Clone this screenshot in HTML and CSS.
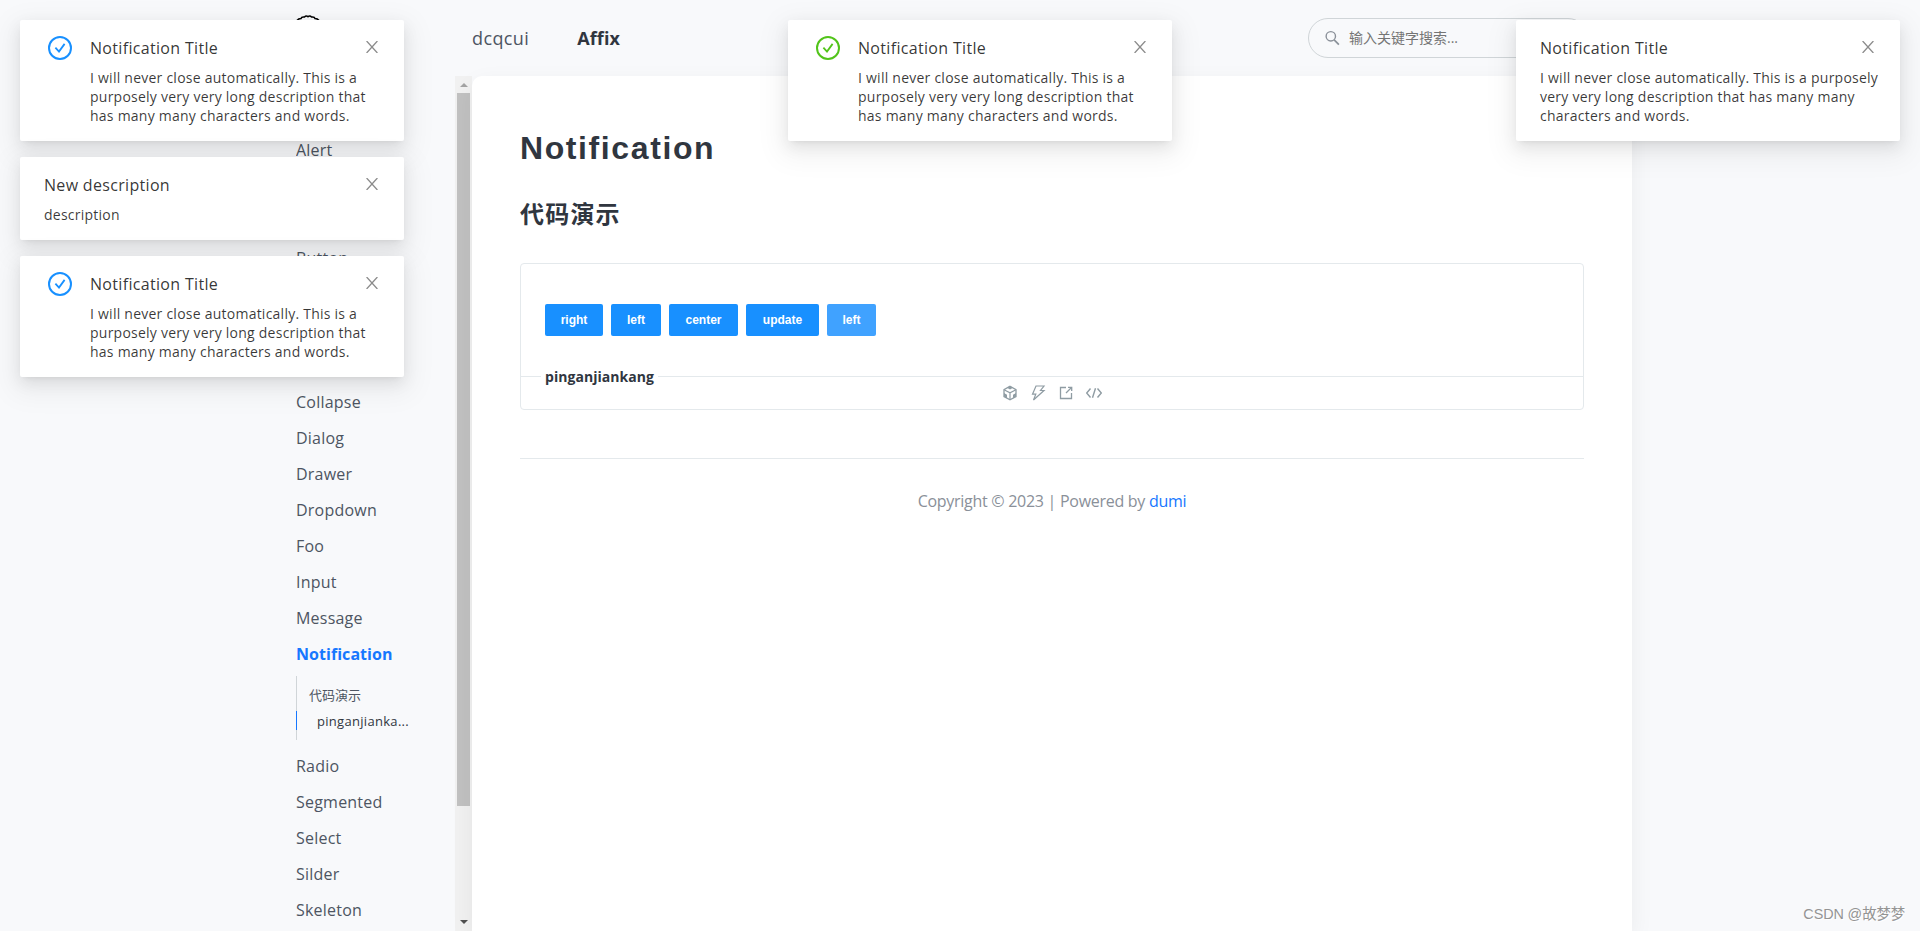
FILE: index.html
```html
<!DOCTYPE html>
<html lang="zh-CN">
<head>
<meta charset="utf-8">
<title>Notification</title>
<link rel="stylesheet" href="styles.css">
</head>
<body>
<svg class="defs" aria-hidden="true">
  <symbol id="check" viewBox="0 0 24 24"><circle cx="12" cy="12" r="11" fill="none" stroke="currentColor" stroke-width="2"/><path d="M7.4 11.600l3.600 3.900 5.600-7.600" fill="none" stroke="currentColor" stroke-width="1.800"/></symbol>
  <symbol id="close" viewBox="0 0 12 12"><path d="M.6 0L11.4 12M11.4 0L.6 12" fill="none" stroke="currentColor" stroke-width="1.3"/></symbol>
</svg>
<div class="page">
  <header class="header">
    <div class="brand">
      <svg class="logo" viewBox="0 0 32 32"><path d="M4 6.500q1.500-2 4-2q.5-2 3.500-1.500q1.500-1.800 3.500-.3q2-1.500 3.500.3q3-.5 3.500 1.500q2.500 0 4 2" fill="none" stroke="#000" stroke-width="1.500"/></svg>
    </div>
    <nav class="nav"><a class="nav-item">dcqcui</a><a class="nav-item nav-on">Affix</a></nav>
    <div class="search">
      <svg class="search-icon" viewBox="0 0 16 16"><circle cx="6.2" cy="6.2" r="5" fill="none" stroke="#8a9099" stroke-width="1.5"/><path d="M9.8 10l5 5" stroke="#8a9099" stroke-width="1.8"/></svg>
      <span>输入关键字搜索...</span>
    </div>
  </header>
  <div class="body">
    <aside class="sidebar">
      <ul class="menu">
        <li class="item alert">Alert</li>
        <li class="item button">Button</li>
        <li class="item">Collapse</li>
        <li class="item">Dialog</li>
        <li class="item">Drawer</li>
        <li class="item">Dropdown</li>
        <li class="item">Foo</li>
        <li class="item">Input</li>
        <li class="item">Message</li>
        <li class="item item-on">Notification</li>
        <li class="toc"><div class="toc-item">代码演示</div><div class="toc-item toc-on"><span>pinganjianka...</span></div></li>
        <li class="item">Radio</li>
        <li class="item">Segmented</li>
        <li class="item">Select</li>
        <li class="item">Silder</li>
        <li class="item">Skeleton</li>
      </ul>
      <div class="scrollbar"><i class="arrow up"></i><div class="thumb"></div><i class="arrow down"></i></div>
    </aside>
    <main class="content">
      <h1>Notification</h1>
      <h2>代码演示</h2>
      <section class="demo">
        <div class="buttons">
          <button class="btn w58">right</button><button class="btn w50">left</button><button class="btn w69">center</button><button class="btn w73">update</button><button class="btn w49 hover">left</button>
        </div>
        <div class="divider"><span class="demo-title">pinganjiankang</span></div>
        <div class="actions">
          <svg viewBox="0 0 16 16"><path d="M8 1.3l6 3.3v6.9l-6 3.3-6-3.3V4.600z" fill="none" stroke="currentColor" stroke-width="1.3"/><path d="M2 4.700l6 3.200 6-3.200M8 8v6.500" fill="none" stroke="currentColor" stroke-width="1.2"/><path d="M8 1l3 1.700-3 1.700-3-1.700zM2 8l3 1.700v3.500l-3-1.700zM14 8l-3 1.700v3.500l3-1.700z" fill="currentColor"/></svg>
          <svg viewBox="0 0 16 16"><path d="M6 1h8l-3.500 4.500H14L3.500 15l2.300-5.800H2.500z" fill="none" stroke="currentColor" stroke-width="1.200"/></svg>
          <svg viewBox="0 0 16 16"><path d="M8 2.500H2.500v11h11V8M8 8l5-5M10 2.300h3.700V6" fill="none" stroke="currentColor" stroke-width="1.300"/></svg>
          <svg viewBox="0 0 16 16"><path d="M4.500 3.500L.7 8l3.800 4.500M11.500 3.500L15.300 8l-3.800 4.500M9.500 3.300l-3 9.400" fill="none" stroke="currentColor" stroke-width="1.400"/></svg>
        </div>
      </section>
      <footer class="footer"><span>Copyright © 2023 | Powered by <a>dumi</a></span></footer>
    </main>
  </div>
</div>

<div class="stack left">
  <article class="notice with-icon"><svg class="status blue"><use href="#check"/></svg><div class="text"><h3>Notification Title</h3><p>I will never close automatically. This is a<br>purposely very very long description that<br>has many many characters and words.</p></div><svg class="close"><use href="#close"/></svg></article>
  <article class="notice"><div class="text"><h3>New description</h3><p>description</p></div><svg class="close"><use href="#close"/></svg></article>
  <article class="notice with-icon"><svg class="status blue"><use href="#check"/></svg><div class="text"><h3>Notification Title</h3><p>I will never close automatically. This is a<br>purposely very very long description that<br>has many many characters and words.</p></div><svg class="close"><use href="#close"/></svg></article>
</div>
<div class="stack center">
  <article class="notice with-icon"><svg class="status green"><use href="#check"/></svg><div class="text"><h3>Notification Title</h3><p>I will never close automatically. This is a<br>purposely very very long description that<br>has many many characters and words.</p></div><svg class="close"><use href="#close"/></svg></article>
</div>
<div class="stack right">
  <article class="notice"><div class="text"><h3>Notification Title</h3><p>I will never close automatically. This is a purposely<br>very very long description that has many many<br>characters and words.</p></div><svg class="close"><use href="#close"/></svg></article>
</div>
<div class="watermark">CSDN @故梦梦</div>
</body>
</html>
```
FILE: styles.css
```css
* { box-sizing: border-box; }
body { margin: 0; height: 931px; overflow: hidden; background: #f8f9fb; font-family: "Open Sans", "Noto Sans CJK SC", sans-serif; color: #30363f; }
h1, h2, h3, p, ul { margin: 0; padding: 0; }
.defs { position: absolute; width: 0; height: 0; }
.page { width: 1336px; margin-left: 296px; height: 931px; display: flex; flex-direction: column; }
.header { height: 76px; flex: none; display: flex; align-items: center; padding-right: 44px; }
.brand { width: 176px; height: 48px; }
.logo { width: 32px; height: 32px; display: block; margin-left: -3px; }
.nav { flex: 1; display: flex; gap: 48px; font-size: 18px; line-height: 24px; color: #4d5562; letter-spacing: .4px; }
.nav-on { font-weight: 700; color: #30363f; letter-spacing: .1px; }
.search { width: 280px; height: 40px; border: 1px solid #d0d5d8; border-radius: 20px; display: flex; align-items: center; gap: 9px; padding-left: 16px; font-size: 14px; color: #757575; }
.search span { margin-top: -2px; }
.search-icon { width: 15px; height: 16px; }
.body { flex: 1; min-height: 0; display: flex; }
.sidebar { width: 176px; display: flex; justify-content: space-between; overflow: hidden; }
.menu { list-style: none; padding-top: 56px; white-space: nowrap; }
.item { height: 36px; line-height: 36px; font-size: 16px; color: #4d5562; letter-spacing: .22px; }
.alert { margin-bottom: 72px; }
.button { margin-bottom: 108px; }
.item-on { font-weight: 700; color: #1677ff; letter-spacing: .05px; }
.toc { margin: 4px 0 8px; height: 64px; padding-top: 6px; border-left: 1px solid #d0d5d8; font-size: 13px; color: #4d5562; }
.toc-item { height: 26px; line-height: 26px; padding-left: 12px; }
.toc-on { height: 19px; margin: 3px 0 0 -1px; line-height: 20px; padding-left: 20px; border-left: 1px solid #1677ff; color: #30363f; letter-spacing: .3px; }
.scrollbar { width: 17px; background: #f1f1f1; padding: 0 2px; display: flex; flex-direction: column; flex: none; }
.arrow { display: block; align-self: center; width: 0; height: 0; border: 4px solid transparent; flex: none; }
.up { border-top: 0; border-bottom-color: #a3a3a3; margin: 7px 0 6px; }
.thumb { height: 713px; background: #c1c1c1; }
.down { border-bottom: 0; border-top-color: #505050; margin-top: 114px; }
.content { width: 1160px; background: #fff; border-radius: 10px 0 0 0; padding: 48px 48px 0; box-shadow: 0 8px 24px rgba(0,0,0,.06); }
h1 { font: 700 32px/48px "Liberation Sans", Arial, sans-serif; letter-spacing: 1.6px; }
h2 { margin-top: 24px; font-size: 24px; line-height: 36px; letter-spacing: 1.2px; }
.demo { margin-top: 31px; height: 147px; border: 1px solid #e4e9ec; border-radius: 4px; }
.buttons { display: flex; gap: 8px; padding: 40px 24px 0; }
.btn { height: 32px; padding: 0; border: 0; border-radius: 2px; background: #1890ff; color: #fff; font: 700 12px "Liberation Sans", Arial, sans-serif; }
.w58 { width: 58px; } .w50 { width: 50px; } .w69 { width: 69px; } .w73 { width: 73px; } .w49 { width: 49px; }
.hover { background: #40a2ff; }
.divider { margin-top: 30px; height: 20px; padding-left: 20px; display: flex; align-items: center; background: linear-gradient(#e4e9ec, #e4e9ec) 0 10px / 100% 1px no-repeat; }
.demo-title { background: #fff; padding: 2px 4px 0; font-size: 14px; font-weight: 700; line-height: 20px; letter-spacing: .05px; }
.actions { display: flex; justify-content: center; gap: 12px; color: #8f9ca3; }
.actions svg { width: 16px; height: 16px; margin-top: -1px; }
.footer { margin-top: 48px; border-top: 1px solid #e4e9ec; text-align: center; font-size: 16px; line-height: 24px; padding-top: 30px; color: #8a9099; letter-spacing: -.28px; }
.footer a { color: #1677ff; }
.stack { position: absolute; top: 20px; width: 384px; display: flex; flex-direction: column; gap: 16px; }
.left { left: 20px; } .center { left: 788px; } .right { left: 1516px; }
.notice { display: flex; align-items: flex-start; background: #fff; border-radius: 2px; padding: 16px 26px 16px 24px; box-shadow: 0 3px 6px -4px rgba(0,0,0,.12), 0 6px 16px rgba(0,0,0,.08), 0 9px 28px 8px rgba(0,0,0,.05); }
.with-icon { padding-left: 28px; }
.status { width: 24px; height: 24px; flex: none; margin-right: 18px; }
.blue { color: #1890ff; } .green { color: #52c41a; }
.text { flex: 1; white-space: nowrap; min-width: 0; }
.text h3 { font-size: 16px; font-weight: 400; line-height: 24px; color: rgba(0,0,0,.8); letter-spacing: .32px; }
.text p { margin-top: 8px; font-size: 14px; line-height: 19px; color: rgba(0,0,0,.78); letter-spacing: .24px; }
.close { width: 12px; height: 12px; margin-top: 5px; flex: none; color: #8c8c8c; }
.watermark { position: absolute; right: 15px; bottom: 7px; font: 14.4px/20px "Liberation Sans", "Noto Sans CJK SC", sans-serif; letter-spacing: -.1px; color: #949494; text-shadow: 1px 1px 0 #fff; white-space: nowrap; }
```
